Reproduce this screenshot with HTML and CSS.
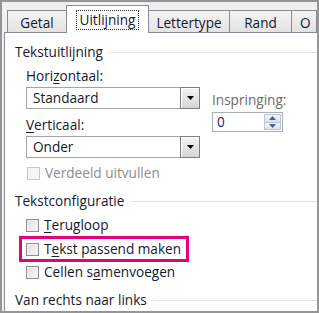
FILE: index.html
```html
<!DOCTYPE html>
<html lang="nl">
<head>
<meta charset="utf-8">
<title>Cellen opmaken - Uitlijning</title>
<link rel="stylesheet" href="styles.css">
</head>
<body>
<div class="frame">
  <div class="tabs">
    <div class="tab t-getal">Getal</div>
    <div class="tab t-uit active"><span class="focus">Uitlijning</span></div>
    <div class="tab t-letter">Lettertype</div>
    <div class="tab t-rand">Rand</div>
    <div class="tab t-o">O</div>
  </div>
  <div class="panel">
    <div class="group-title"><span>Tekstuitlijning</span></div>
    <div class="align-row">
      <div class="col-left">
        <div class="label">Hori<u>z</u>ontaal:</div>
        <div class="combo">
          <span class="combo-text">Standaard</span>
          <span class="combo-btn"><svg width="7" height="4" viewBox="0 0 7 4"><path d="M0 0H7L3.5 4Z" fill="#000"/></svg></span>
        </div>
        <div class="label label-v"><u>V</u>erticaal:</div>
        <div class="combo">
          <span class="combo-text">Onder</span>
          <span class="combo-btn"><svg width="7" height="4" viewBox="0 0 7 4"><path d="M0 0H7L3.5 4Z" fill="#000"/></svg></span>
        </div>
        <div class="check disabled first-check"><span class="box"></span>Verdeeld uitvullen</div>
      </div>
      <div class="col-right">
        <div class="label muted">Inspringing:</div>
        <div class="spin">
          <span class="spin-text">0</span>
          <span class="spin-btns">
            <span class="spin-up"><svg width="7" height="4" viewBox="0 0 7 4"><path d="M0 4H7L3.5 0Z" fill="#4a6287"/></svg></span>
            <span class="spin-down"><svg width="7" height="4" viewBox="0 0 7 4"><path d="M0 0H7L3.5 4Z" fill="#4a6287"/></svg></span>
          </span>
        </div>
      </div>
    </div>
    <div class="group-title gt2"><span>Tekstconfiguratie</span></div>
    <div class="check c1"><span class="box"></span><span><u>T</u>erugloop</span></div>
    <div class="check c2"><span class="hl"><span class="box"></span><span>T<u>e</u>kst passend maken</span></span></div>
    <div class="check c3"><span class="box"></span><span>Cellen s<u>a</u>menvoegen</span></div>
    <div class="group-title gt3"><span>Van rechts naar links</span></div>
  </div>
</div>
</body>
</html>
```

FILE: styles.css
```css
* { box-sizing: border-box; }
html, body { margin: 0; padding: 0; background: #fff; }
body {
  font-family: "Open Sans", "Noto Sans", sans-serif;
  font-size: 13.6px;
  color: #161a2e;
}
u { text-decoration: underline; text-underline-offset: 2px; }

.frame {
  width: 319px;
  height: 313px;
  border: 2px solid #959595;
  background: #f0f0f0;
  display: flex;
  flex-direction: column;
  overflow: hidden;
}

.tabs {
  height: 30px;
  display: flex;
  align-items: flex-end;
  padding-left: 5px;
  flex-shrink: 0;
}
.tab {
  height: 22px;
  border: 1px solid #898c95;
  border-bottom: none;
  background: linear-gradient(#f3f3f3, #e3e3e3);
  display: flex;
  align-items: center;
  justify-content: center;
  color: #161a2e;
  padding-top: 1px;
  white-space: nowrap;
}
.t-getal { width: 60px; }
.t-uit { width: 83px; }
.t-letter { width: 82px; }
.t-rand { width: 63px; }
.t-o { flex: 1; justify-content: flex-start; padding-left: 8px; }
.tab + .tab { margin-left: -1px; }
.tab.active {
  background: #fff;
  margin-bottom: -1px;
  position: relative;
  z-index: 2;
  height: 28px;
}
.focus {
  border: 1px dotted #333;
  padding: 0 3px;
  line-height: 18px;
}

.panel {
  flex: 1;
  margin-left: 2px;
  background: #fff;
  border-left: 1px solid #898c95;
  border-top: 1px solid #898c95;
  padding: 10px 0 0 10px;
}

.group-title {
  display: flex;
  align-items: center;
  height: 18px;
  line-height: 18px;
}
.group-title::after {
  content: "";
  flex: 1;
  height: 1px;
  background: #dce2e7;
  margin-left: 7px;
}
.gt2 { margin-top: 10px; }
.gt3 { margin-top: 10px; }

.align-row {
  display: flex;
  padding-left: 11px;
  gap: 12px;
  margin-top: 6px;
}
.col-left { width: 174px; }
.col-right { width: 71px; padding-top: 24px; }

.label { height: 18px; line-height: 18px; white-space: nowrap; }
.label-v { margin-top: 7px; }
.muted { color: #6e6a66; }

.combo {
  margin-top: 2px;
  height: 22px;
  border: 1px solid #a4a4a4;
  display: flex;
  align-items: stretch;
  background: #fff;
}
.combo-text { flex: 1; padding-left: 6px; line-height: 20px; }
.combo-btn {
  width: 20px;
  margin: -1px -1px -1px 0;
  border: 1px solid #7e7e7e;
  background: linear-gradient(#f4f4f4, #d6d6d6);
  box-shadow: inset 1px 1px 0 #fff;
  display: flex;
  align-items: center;
  justify-content: center;
}

.spin {
  margin-top: 3px;
  height: 20px;
  border: 1px solid #abadb3;
  display: flex;
  background: #fff;
}
.spin-text { flex: 1; padding-left: 4px; line-height: 18px; color: #1a2460; }
.spin-btns {
  width: 17px;
  margin: 1px 1px 1px 0;
  display: flex;
  flex-direction: column;
}
.spin-up, .spin-down {
  flex: 1;
  border: 1px solid #bac6d6;
  background: linear-gradient(#f3f6fa, #d9e2ed);
  display: flex;
  align-items: center;
  justify-content: center;
}
.spin-down { border-top: none; }

.check {
  display: flex;
  align-items: center;
  height: 18px;
  line-height: 18px;
  padding-left: 11px;
  white-space: nowrap;
}
.first-check { padding-left: 1px; margin-top: 6px; }
.check .box {
  width: 13px;
  height: 13px;
  border: 1px solid #8e8f8f;
  background: linear-gradient(135deg, #dcdcdc, #fbfbfb);
  box-shadow: inset 0 0 0 1px #f0f0f0;
  margin-right: 5px;
  flex-shrink: 0;
}
.check.disabled { color: #8d8d8d; }
.check.disabled .box {
  border-color: #c8c8c8;
  background: #f5f5f5;
  box-shadow: none;
}
.c1 { margin-top: 6px; }
.c2 { margin-top: 6px; }
.c3 { margin-top: 5px; }
.hl {
  display: inline-flex;
  align-items: center;
  outline: 3px solid #e5007d;
  outline-offset: 1px;
  padding: 0 4px 0 3px;
  margin-left: -3px;
}
```
